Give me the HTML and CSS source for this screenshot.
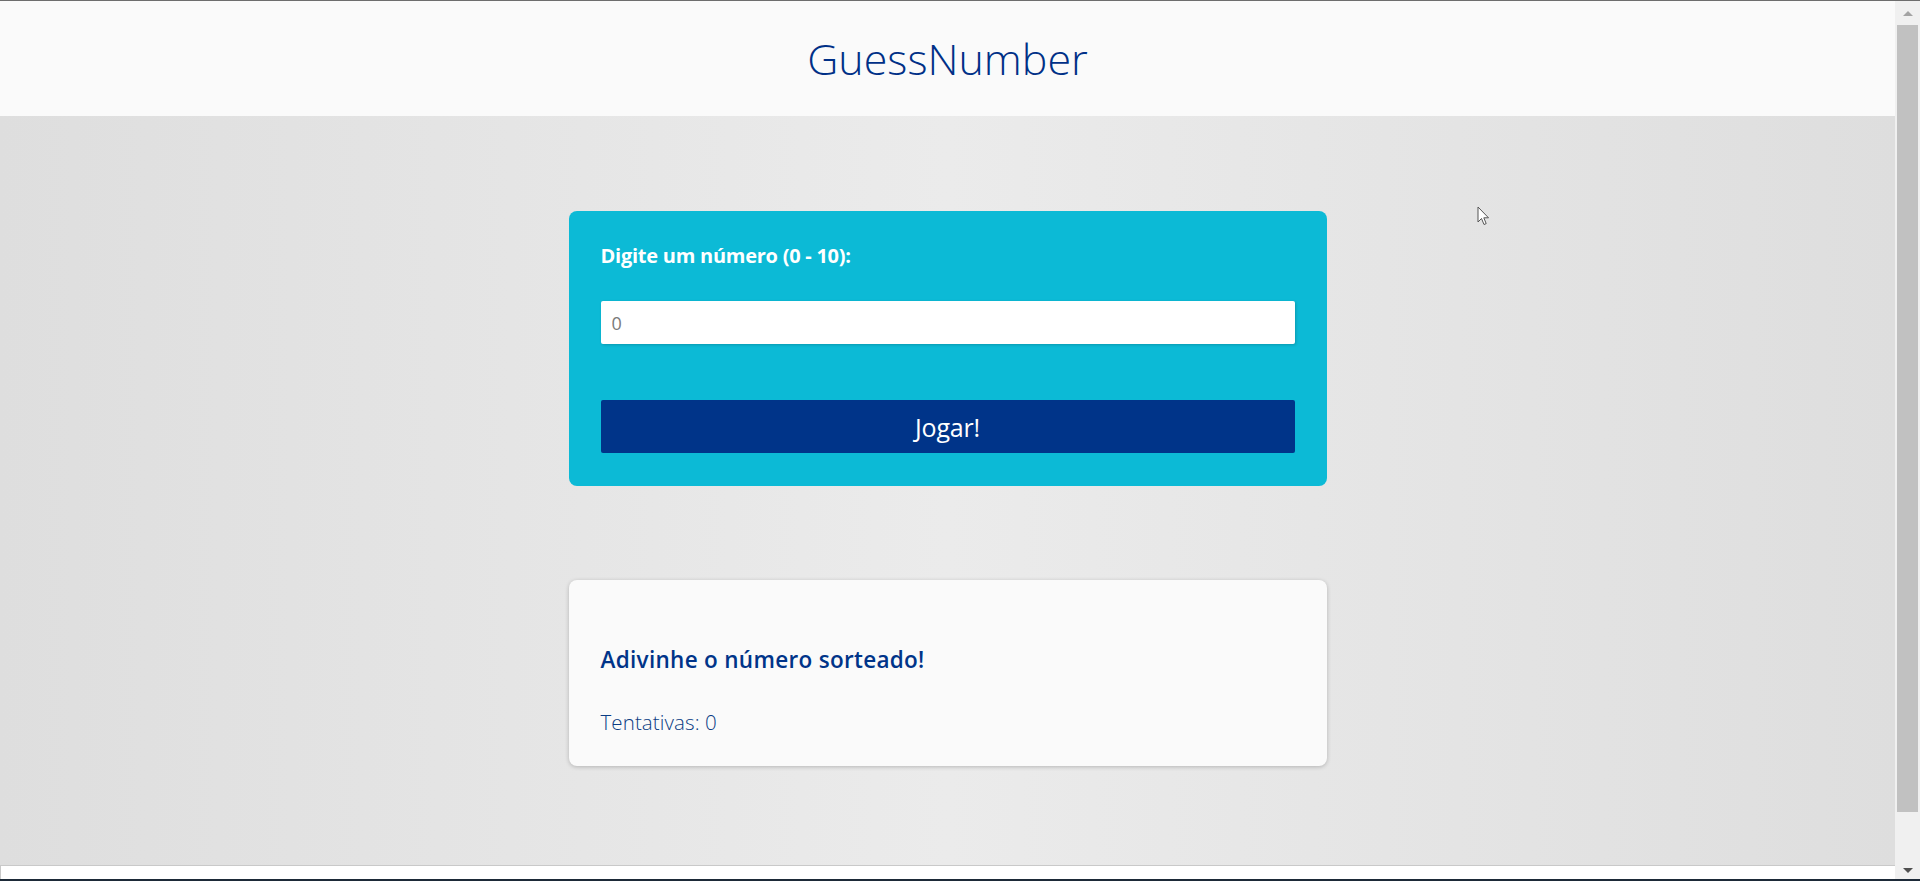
FILE: index.html
```html
<!DOCTYPE html>
<html lang="pt-BR">
<head>
<meta charset="utf-8">
<title>GuessNumber</title>
<link rel="stylesheet" href="styles.css">
</head>
<body class="window">
  <div class="viewport">
    <div class="page">
      <header class="topbar">
        <h1 class="brand">GuessNumber</h1>
      </header>
      <main class="stage">
        <section class="card card-play">
          <label class="field-label" for="guess">Digite um número (0 - 10):</label>
          <input class="field-input" id="guess" type="number" placeholder="0">
          <button class="btn-play" type="button">Jogar!</button>
        </section>
        <section class="card card-status">
          <h2 class="status-title">Adivinhe o número sorteado!</h2>
          <p class="status-tries">Tentativas: 0</p>
        </section>
      </main>
      <div class="statusbar"></div>
    </div>
    <div class="scrollbar">
      <div class="sb-btn sb-up"><span class="tri-up"></span></div>
      <div class="sb-track"><div class="sb-thumb"></div></div>
      <div class="sb-btn sb-down"><span class="tri-down"></span></div>
    </div>
  </div>
  <svg class="cursor" width="13" height="20" viewBox="0 0 13 20" aria-hidden="true">
    <path d="M1 1 L1 16 L4.5 12.5 L7 18.5 L9.2 17.6 L6.8 11.8 L11.5 11.8 Z" fill="#ffffff" stroke="#555" stroke-width="1" stroke-linejoin="round"/>
  </svg>
</body>
</html>
```
FILE: styles.css
```css
* { box-sizing: border-box; }

html, body { margin: 0; padding: 0; }

.window {
  height: 881px;
  overflow: hidden;
  border-top: 1px solid #6d6d6d;
  border-bottom: 2px solid #1d2a38;
  font-family: "Open Sans", "Noto Sans", sans-serif;
  position: relative;
}

.viewport {
  display: flex;
  height: 100%;
}

.page {
  flex: 1;
  min-width: 0;
  display: flex;
  flex-direction: column;
}

.topbar {
  height: 115px;
  flex: none;
  background: #fafafa;
  display: flex;
  align-items: center;
  justify-content: center;
}

.brand {
  margin: 0 0 1px 0;
  font-size: 43px;
  font-weight: 300;
  line-height: 1;
  color: #003087;
  letter-spacing: 0;
}

.stage {
  flex: 1;
  display: flex;
  flex-direction: column;
  align-items: center;
  padding-top: 95px;
  background: linear-gradient(to right, #dedede 0%, #ebebeb 50%, #dedede 100%);
}

.card {
  width: 40%;
  border-radius: 8px;
  display: flex;
  flex-direction: column;
}

.card-play {
  background: #0cbad6;
  padding: 32px 32px 33px;
  margin-bottom: 94px;
}

.field-label {
  color: #ffffff;
  font-weight: 700;
  font-size: 20px;
  line-height: 26px;
  letter-spacing: -0.25px;
  margin-bottom: 32px;
}

.field-input {
  height: 43px;
  border: none;
  border-radius: 2px;
  background: #ffffff;
  padding: 0 11px;
  font-family: inherit;
  font-size: 18px;
  font-weight: 400;
  color: #333;
  box-shadow: 1px 1px 3px rgba(0, 0, 0, 0.18);
  margin-bottom: 56px;
  outline: none;
  -moz-appearance: textfield;
}

.field-input::placeholder { color: #7a7a7a; }
.field-input::-webkit-inner-spin-button,
.field-input::-webkit-outer-spin-button { -webkit-appearance: none; margin: 0; }

.btn-play {
  height: 53px;
  border: none;
  border-radius: 2px;
  background: #003489;
  color: #ffffff;
  font-family: inherit;
  font-size: 25px;
  font-weight: 400;
  letter-spacing: -0.2px;
  cursor: pointer;
}

.card-status {
  background: #fafafa;
  padding: 66px 32px 31px;
  box-shadow: 0 1px 4px rgba(0, 0, 0, 0.22);
}

.status-title {
  margin: 0 0 35px;
  font-size: 22.5px;
  font-weight: 600;
  line-height: 28px;
  color: #003489;
  letter-spacing: 0.3px;
}

.status-tries {
  margin: 0;
  font-size: 20.5px;
  font-weight: 300;
  line-height: 26px;
  letter-spacing: 0.1px;
  color: #0b3c84;
}

.statusbar {
  height: 14px;
  flex: none;
  background: #ffffff;
  border-top: 1px solid #c9c9c9;
  border-left: 1px solid #c9c9c9;
}

.scrollbar {
  width: 25px;
  flex: none;
  background: #f0f0f0;
  display: flex;
  flex-direction: column;
}

.sb-btn {
  display: flex;
  align-items: center;
  justify-content: center;
  flex: none;
}

.sb-up { height: 24px; }
.sb-down { height: 22px; align-items: flex-end; padding-bottom: 6px; }

.tri-up {
  width: 0; height: 0;
  border-left: 5px solid transparent;
  border-right: 5px solid transparent;
  border-bottom: 5px solid #a3a3a3;
}

.tri-down {
  width: 0; height: 0;
  border-left: 5px solid transparent;
  border-right: 5px solid transparent;
  border-top: 5px solid #505050;
}

.sb-track {
  flex: 1;
  padding: 0 2px;
}

.sb-thumb {
  height: 787px;
  background: #c1c1c1;
}

.cursor {
  position: absolute;
  left: 1477px;
  top: 205px;
}
```
